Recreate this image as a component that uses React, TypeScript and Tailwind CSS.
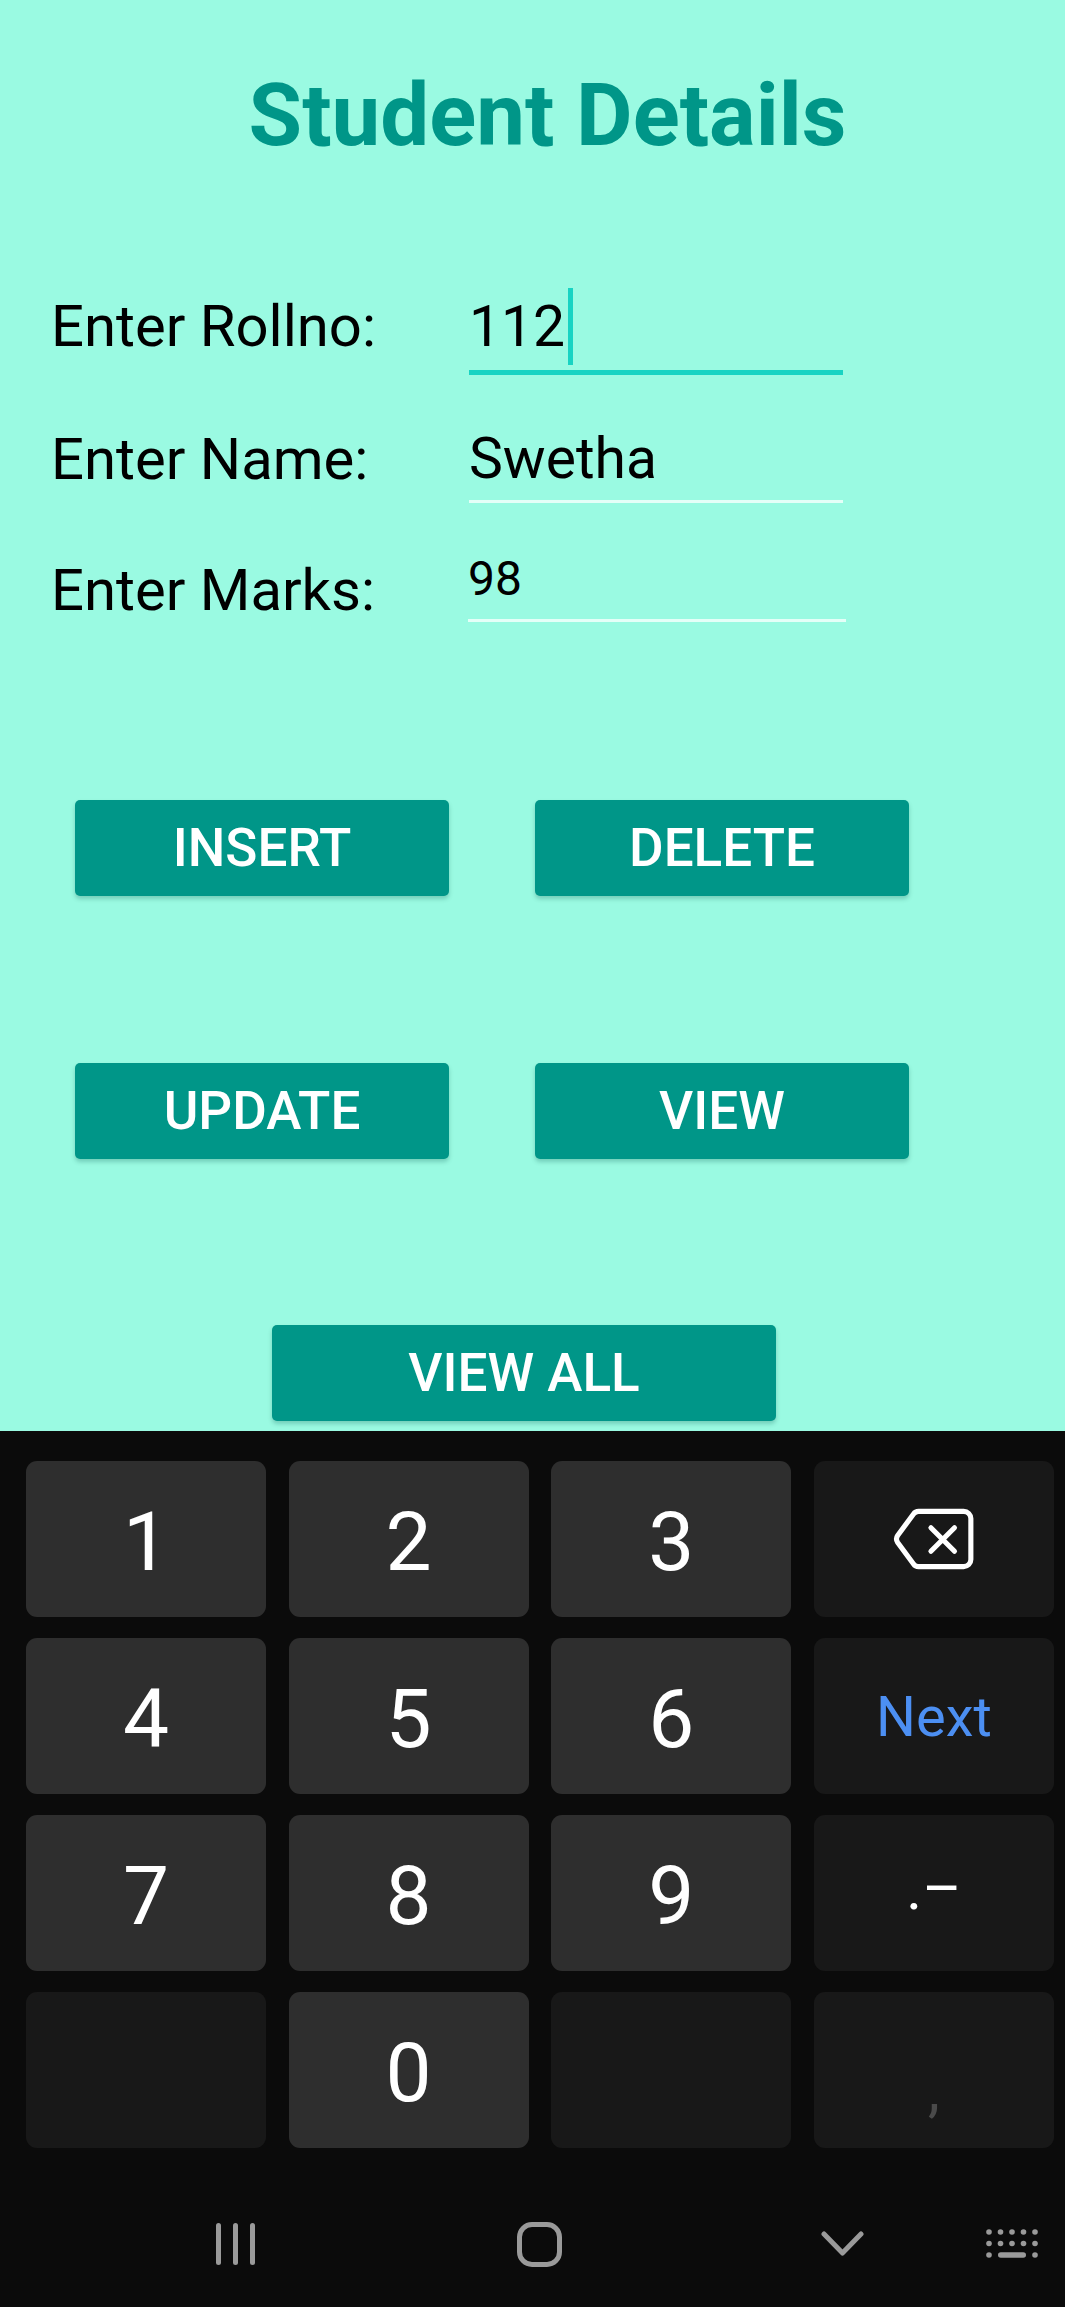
import React from "react";

type Key = {
  label?: string;
  kind: "digit" | "fn";
  tone?: "blue" | "faint";
  icon?: "backspace";
};

const keyRows: Key[][] = [
  [
    { label: "1", kind: "digit" },
    { label: "2", kind: "digit" },
    { label: "3", kind: "digit" },
    { kind: "fn", icon: "backspace" },
  ],
  [
    { label: "4", kind: "digit" },
    { label: "5", kind: "digit" },
    { label: "6", kind: "digit" },
    { label: "Next", kind: "fn", tone: "blue" },
  ],
  [
    { label: "7", kind: "digit" },
    { label: "8", kind: "digit" },
    { label: "9", kind: "digit" },
    { label: ".–", kind: "fn" },
  ],
  [
    { kind: "fn" },
    { label: "0", kind: "digit" },
    { kind: "fn" },
    { label: ",", kind: "fn", tone: "faint" },
  ],
];

const BackspaceIcon = () => (
  <svg width="86" height="66" viewBox="0 0 84 64" fill="none">
    <path
      d="M27 5H71a7 7 0 0 1 7 7V52a7 7 0 0 1 -7 7H27a6 6 0 0 1 -5 -2.6L6.5 35.4a6 6 0 0 1 0 -6.8L22 7.6A6 6 0 0 1 27 5Z"
      stroke="#fff"
      strokeWidth="5"
      strokeLinejoin="round"
    />
    <path
      d="M39 21L62 44M62 21L39 44"
      stroke="#fff"
      strokeWidth="5"
      strokeLinecap="round"
    />
  </svg>
);

const KeyButton = ({ k }: { k: Key }) => {
  const bg = k.kind === "digit" ? "bg-[#2e2e2e]" : "bg-[#181818]";
  let text = "text-white text-[82px] pt-[6px]";
  if (k.tone === "blue") text = "text-[#4c8ff2] text-[56px] pt-[2px]";
  if (k.tone === "faint") text = "text-[#4a4a4a] text-[60px] pt-[40px]";
  if (k.label === ".–") text = "text-white text-[60px] -mt-[8px]";
  return (
    <div
      className={`${bg} h-[156px] rounded-[11px] flex items-center justify-center`}
    >
      {k.icon === "backspace" ? (
        <BackspaceIcon />
      ) : (
        <span className={`${text} leading-none`}>{k.label}</span>
      )}
    </div>
  );
};

const TealButton = ({ label, width }: { label: string; width: string }) => (
  <button
    className={`${width} h-[96px] bg-[#009688] rounded-[5px] text-white text-[53px] leading-none font-medium shadow-[0_3px_4px_rgba(0,80,70,0.25)] flex items-center justify-center`}
  >
    {label}
  </button>
);

export default function App() {
  return (
    <div className="w-[1065px] h-[2307px] flex flex-col [font-family:Roboto,sans-serif] overflow-hidden">
      {/* Form area */}
      <div className="h-[1431px] bg-[#9afae2] shrink-0">
        <h1 className="pt-[72px] pl-[30px] text-center text-[87px] leading-[87px] font-bold text-[#009688]">
          Student Details
        </h1>

        {/* Rollno */}
        <div className="flex mt-[135px] pl-[51px]">
          <div className="w-[418px] text-[58px] leading-[64px] text-black">
            Enter Rollno:
          </div>
          <div className="w-[374px] flex flex-col">
            <div className="h-[64px] flex items-center text-[57px] text-black">
              <span className="leading-none">112</span>
              <span className="w-[5px] h-[77px] bg-[#18d3c3] ml-[3px]" />
            </div>
            <div className="mt-[12px] h-[5px] bg-[#18d3c3]" />
          </div>
        </div>

        {/* Name */}
        <div className="flex mt-[52px] pl-[51px]">
          <div className="w-[418px] text-[58px] leading-[64px] text-black">
            Enter Name:
          </div>
          <div className="w-[374px] flex flex-col">
            <div className="text-[57px] leading-[64px] text-black">Swetha</div>
            <div className="mt-[9px] h-[3px] bg-[#e4fff8]" />
          </div>
        </div>

        {/* Marks */}
        <div className="flex items-start mt-[52px] pl-[51px]">
          <div className="w-[417px] mt-[3px] text-[58px] leading-[64px] text-black">
            Enter Marks:
          </div>
          <div className="w-[378px] flex flex-col">
            <div className="text-[48px] leading-[48px] text-black">98</div>
            <div className="mt-[16px] h-[3px] bg-[#e4fff8]" />
          </div>
        </div>

        {/* Buttons */}
        <div className="flex gap-[86px] pl-[75px] mt-[178px]">
          <TealButton label="INSERT" width="w-[374px]" />
          <TealButton label="DELETE" width="w-[374px]" />
        </div>
        <div className="flex gap-[86px] pl-[75px] mt-[167px]">
          <TealButton label="UPDATE" width="w-[374px]" />
          <TealButton label="VIEW" width="w-[374px]" />
        </div>
        <div className="flex pl-[272px] mt-[166px]">
          <TealButton label="VIEW ALL" width="w-[504px]" />
        </div>
      </div>

      {/* Keyboard */}
      <div className="flex-1 bg-[#0b0b0b] pt-[30px] pl-[26px] pr-[12px]">
        <div className="grid grid-cols-[repeat(4,240px)] gap-x-[22.67px] gap-y-[21px]">
          {keyRows.flat().map((k, i) => (
            <KeyButton key={i} k={k} />
          ))}
        </div>

        {/* Navigation bar */}
        <div className="mt-[48px] h-[96px] flex items-center -ml-[26px]">
          <div className="ml-[216px] flex gap-[12px]">
            <span className="w-[5px] h-[42px] rounded-full bg-[#9a9a9a]" />
            <span className="w-[5px] h-[42px] rounded-full bg-[#9a9a9a]" />
            <span className="w-[5px] h-[42px] rounded-full bg-[#9a9a9a]" />
          </div>
          <div className="ml-[262px] w-[45px] h-[45px] rounded-[15px] border-[5px] border-[#9a9a9a]" />
          <svg
            className="ml-[259px]"
            width="43"
            height="26"
            viewBox="0 0 43 26"
            fill="none"
          >
            <path
              d="M3 3L21.5 22L40 3"
              stroke="#9a9a9a"
              strokeWidth="5"
              strokeLinecap="round"
              strokeLinejoin="round"
            />
          </svg>
          <svg
            className="ml-[122px]"
            width="52"
            height="30"
            viewBox="0 0 52 30"
            fill="#9a9a9a"
          >
            {[0, 1].map((r) =>
              [0, 1, 2, 3, 4].map((c) => (
                <circle key={`${r}-${c}`} cx={3 + c * 11.5} cy={3 + r * 11.5} r="2.8" />
              ))
            )}
            <circle cx="3" cy="26" r="2.8" />
            <circle cx="49" cy="26" r="2.8" />
            <rect x="12" y="23.2" width="28" height="5.6" rx="2.8" />
          </svg>
        </div>
      </div>
    </div>
  );
}
